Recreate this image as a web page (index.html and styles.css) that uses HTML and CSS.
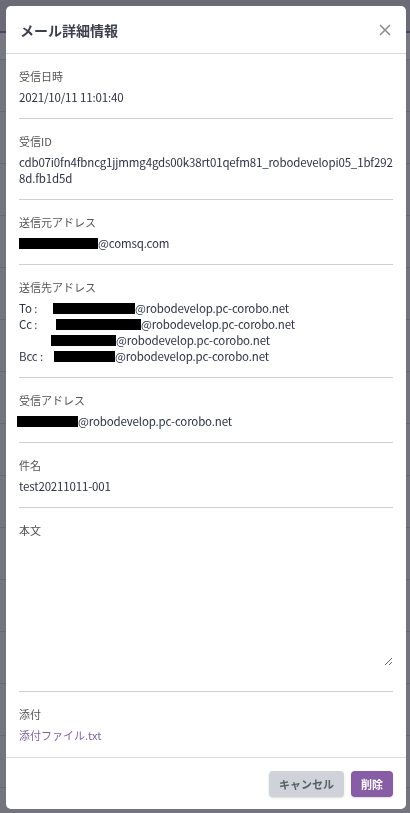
FILE: index.html
```html
<!DOCTYPE html>
<html lang="ja">
<head>
<meta charset="utf-8">
<title>メール詳細情報</title>
<link rel="stylesheet" href="styles.css">
</head>
<body>
<div class="page">
  <div class="page-top"></div>
  <div class="page-sub"></div>
  <div class="page-row"></div>
  <div class="page-row"></div>
  <div class="page-row"></div>
  <div class="page-row"></div>
  <div class="page-row"></div>
  <div class="page-row"></div>
  <div class="page-row"></div>
  <div class="page-row"></div>
  <div class="page-row"></div>
  <div class="page-row"></div>
  <div class="page-row"></div>
  <div class="page-row"></div>
  <div class="page-row"></div>
  <div class="page-row"></div>
</div>

<div class="modal">
  <div class="modal-header">
    <h1 class="modal-title">メール詳細情報</h1>
    <button class="close" aria-label="close">
      <svg width="12" height="12" viewBox="0 0 12 12"><path d="M1 1L11 11M11 1L1 11" stroke="#8a8a8a" stroke-width="1.5" fill="none"/></svg>
    </button>
  </div>
  <div class="modal-body">
    <div class="field">
      <div class="label">受信日時</div>
      <div class="value">2021/10/11 11:01:40</div>
    </div>
    <div class="field">
      <div class="label">受信ID</div>
      <div class="value">cdb07i0fn4fbncg1jjmmg4gds00k38rt01qefm81_robodevelopi05_1bf292<wbr>8d.fb1d5d</div>
    </div>
    <div class="field">
      <div class="label">送信元アドレス</div>
      <div class="value"><span class="redact r-from"></span>@comsq.com</div>
    </div>
    <div class="field">
      <div class="label">送信先アドレス</div>
      <div class="value addr-grid">
        <span class="prefix">To :</span><span><span class="redact r-to"></span>@robodevelop.pc-corobo.net</span>
        <span class="prefix">Cc :</span><span><span class="redact r-cc1"></span>@robodevelop.pc-corobo.net</span>
        <span class="prefix"></span><span><span class="redact r-cc2"></span>@robodevelop.pc-corobo.net</span>
        <span class="prefix">Bcc :</span><span><span class="redact r-bcc"></span>@robodevelop.pc-corobo.net</span>
      </div>
    </div>
    <div class="field">
      <div class="label">受信アドレス</div>
      <div class="value"><span class="redact r-rcv"></span>@robodevelop.pc-corobo.net</div>
    </div>
    <div class="field">
      <div class="label">件名</div>
      <div class="value">test20211011-001</div>
    </div>
    <div class="field field-body">
      <div class="label">本文</div>
      <textarea class="body-text" readonly></textarea>
    </div>
    <div class="field field-last">
      <div class="label">添付</div>
      <div class="value"><a class="attach" href="#">添付ファイル.txt</a></div>
    </div>
  </div>
  <div class="modal-footer">
    <button class="btn btn-cancel">キャンセル</button>
    <button class="btn btn-delete">削除</button>
  </div>
</div>
</body>
</html>
```

FILE: styles.css
```css
* { box-sizing: border-box; }

html, body {
  margin: 0;
  padding: 0;
  height: 100%;
}

body {
  background: #74747f;
  font-family: "Noto Sans CJK JP", "Noto Sans", sans-serif;
  overflow: hidden;
}

.page-top {
  height: 33px;
  background: #6b6b77;
  border-bottom: 2px solid #514169;
}

.page-sub {
  height: 27px;
  background: #787883;
  border-bottom: 1px solid #6a6a75;
}

.page-row {
  height: 52px;
  border-bottom: 1px solid #686873;
}

.modal {
  position: fixed;
  top: 6px;
  left: 6px;
  width: 400px;
  height: 803px;
  background: #fff;
  border-radius: 5px;
  display: flex;
  flex-direction: column;
  overflow: hidden;
}

.modal-header {
  height: 48px;
  padding: 0 15px 0 14px;
  display: flex;
  align-items: center;
  justify-content: space-between;
  border-bottom: 1px solid #d9d9d9;
  flex: none;
}

.modal-title {
  margin: 0;
  font-size: 14px;
  font-weight: 700;
  color: #3b3f4a;
  line-height: 20px;
}

.close {
  border: none;
  background: none;
  padding: 0;
  width: 12px;
  height: 12px;
  display: flex;
}

.modal-body {
  flex: 1;
  padding: 0 13px;
  overflow: hidden;
}

.field {
  padding: 14px 0 13px;
  border-bottom: 1px solid #d0d0d0;
}

.label {
  font-size: 11px;
  line-height: 16px;
  color: #555;
}

.value {
  margin-top: 5px;
  font-size: 11.5px;
  letter-spacing: -0.15px;
  line-height: 16px;
  color: #2e3244;
}

.redact {
  display: inline-block;
  height: 11px;
  background: #000;
  vertical-align: -1px;
}

.r-from { width: 79px; }
.r-rcv { width: 61px; margin-left: -2px; }
.r-to { width: 82px; margin-left: 2px; }
.r-cc1 { width: 85px; margin-left: 5px; }
.r-cc2 { width: 65px; }
.r-bcc { width: 61px; margin-left: 3px; }

.addr-grid {
  display: grid;
  grid-template-columns: 32px 1fr;
}

.prefix { white-space: nowrap; }

.field-body { padding-bottom: 25px; }

.body-text {
  display: block;
  width: 100%;
  height: 123px;
  margin-top: 5px;
  padding: 0;
  border: none;
  outline: none;
  resize: vertical;
  font-family: inherit;
  font-size: 12px;
  background: #fff;
}

.field-last {
  border-bottom: none;
  padding-bottom: 12px;
}

.attach {
  font-size: 11px;
  letter-spacing: 0;
  color: #7f64a2;
  text-decoration: none;
}

.modal-footer {
  flex: none;
  border-top: 1px solid #dcdcdc;
  padding: 13px 13px 12px;
  display: flex;
  justify-content: flex-end;
  gap: 7px;
}

.btn {
  height: 26px;
  padding: 0 10px;
  border: none;
  border-radius: 4px;
  font-family: inherit;
  font-size: 11px;
  font-weight: 700;
  box-shadow: 0 1px 2px rgba(0, 0, 0, 0.15);
}

.btn-cancel {
  background: #cfd2d9;
  color: #5a5d66;
}

.btn-delete {
  background: #875ea5;
  color: #fff;
}
```
